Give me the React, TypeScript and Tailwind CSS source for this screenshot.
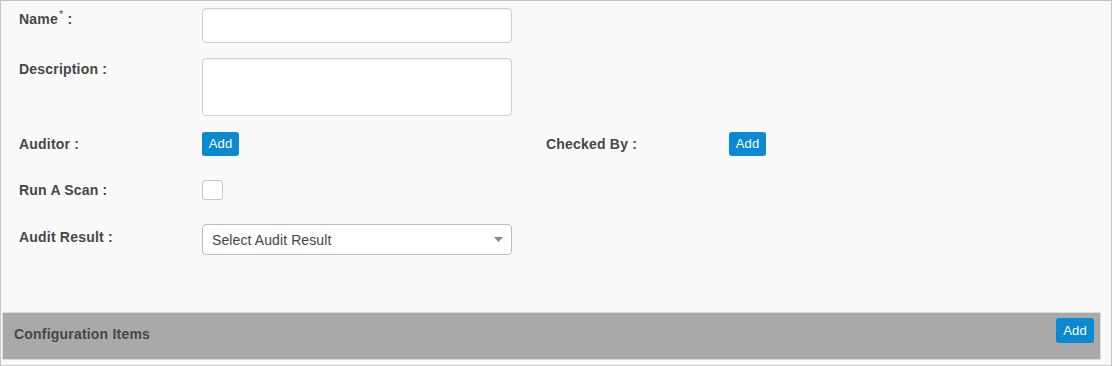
import React from "react";

const labelCls =
  "w-[183px] shrink-0 text-[14px] leading-[20px] font-bold text-[#474747] tracking-[0.2px]";
const btnCls =
  "bg-[#0a8ad2] text-white text-[13px] leading-[24px] h-[24px] w-[37px] text-center rounded-[3px] tracking-[0.2px]";

export default function App() {
  return (
    <div
      className="w-[1112px] h-[366px] border border-[#c6c6c6] bg-[#fafafa] flex flex-col"
      style={{ fontFamily: '"Liberation Sans", Arial, sans-serif' }}
    >
      <div className="pl-[18px] pt-[7px] flex flex-col">
        {/* Name */}
        <div className="flex items-start">
          <div className={labelCls + " pt-[1px]"}>
            Name
            <span className="text-[11px] font-normal relative -top-[6px] ml-[1px] mr-[4px]">*</span>:
          </div>
          <input
            type="text"
            className="w-[310px] h-[35px] bg-white border border-[#cfcfcf] rounded-[4px] shadow-[inset_0_1px_1px_rgba(0,0,0,0.05)] outline-none"
          />
        </div>
        {/* Description */}
        <div className="flex items-start mt-[15px]">
          <div className={labelCls + " pt-[1px]"}>Description :</div>
          <textarea className="w-[310px] h-[58px] bg-white border border-[#cfcfcf] rounded-[4px] shadow-[inset_0_1px_1px_rgba(0,0,0,0.05)] outline-none resize-none" />
        </div>
        {/* Auditor / Checked by */}
        <div className="flex items-start mt-[16px]">
          <div className="w-[527px] flex items-start">
            <div className={labelCls + " pt-[2px]"}>Auditor :</div>
            <button className={btnCls}>Add</button>
          </div>
          <div className="w-[527px] flex items-start">
            <div className={labelCls + " pt-[2px]"}>Checked By :</div>
            <button className={btnCls}>Add</button>
          </div>
        </div>
        {/* Run a scan */}
        <div className="flex items-start mt-[24px]">
          <div className={labelCls}>Run A Scan :</div>
          <div className="w-[21px] h-[20px] bg-white border border-[#c4c4c4] rounded-[3px]" />
        </div>
        {/* Audit result */}
        <div className="flex items-start mt-[24px]">
          <div className={labelCls + " pt-[3px]"}>Audit Result :</div>
          <div className="w-[310px] h-[31px] bg-white border border-[#bdbdbd] rounded-[4px] flex items-center justify-between pl-[9px] pr-[8px]">
            <span className="text-[14px] text-[#444] pt-[1px] tracking-[0.1px]">Select Audit Result</span>
            <svg width="9" height="5" viewBox="0 0 9 5">
              <path d="M0 0 L9 0 L4.5 5 Z" fill="#888" />
            </svg>
          </div>
        </div>
      </div>
      <div className="mt-auto mb-[5px] ml-[1px] mr-[10px] h-[48px] bg-[#a9a9a9] border border-[#dcdcdc] flex items-start justify-between pl-[11px] pr-[6px] pt-[5px] pb-[9px]">
        <span className="self-center text-[14px] font-bold text-[#474747] tracking-[0.2px]">
          Configuration Items
        </span>
        <button className="bg-[#0a8ad2] text-white text-[13px] leading-[25px] h-[25px] w-[38px] text-center rounded-[3px] tracking-[0.2px]">
          Add
        </button>
      </div>
    </div>
  );
}
